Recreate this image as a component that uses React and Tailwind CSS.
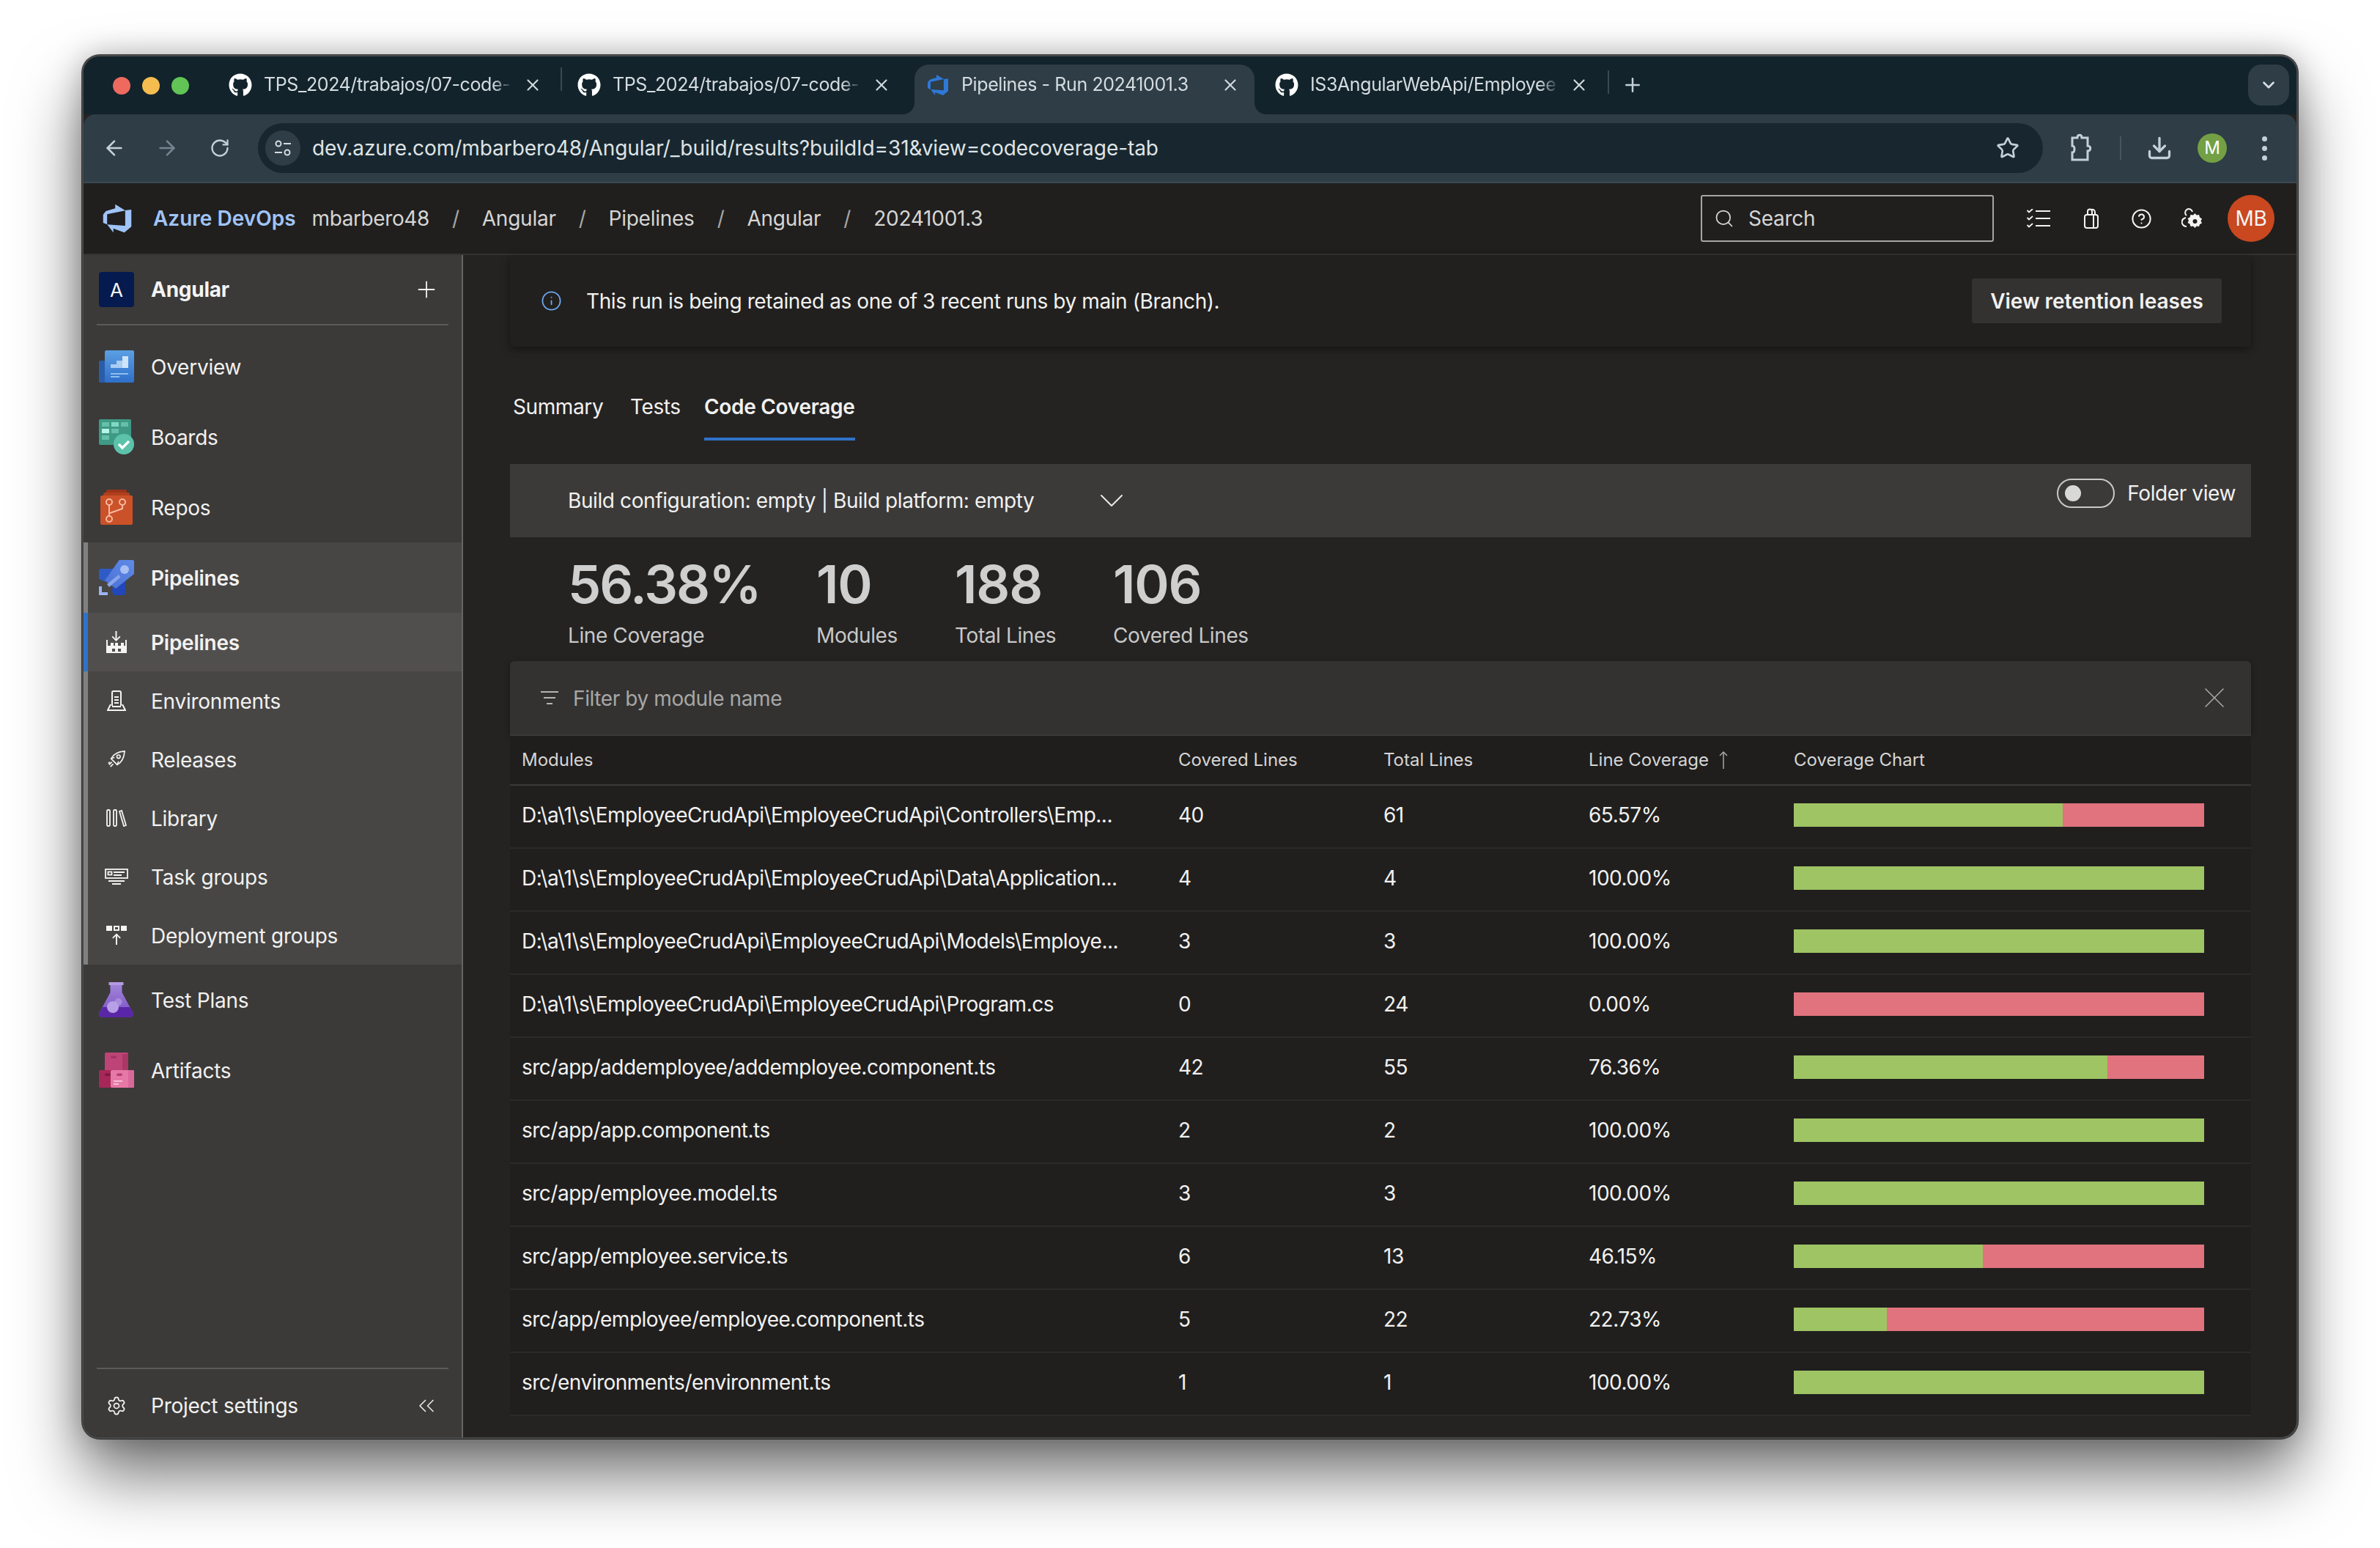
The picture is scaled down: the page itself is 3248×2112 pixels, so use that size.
import { FaGithub } from 'react-icons/fa'
import { VscAzureDevops } from 'react-icons/vsc'
import { ArrowLeft, ArrowRight, RotateCw, Star, Download, Plus, X, ChevronDown, Search, ChevronsLeft, Settings, Info, CircleHelp } from 'lucide-react'

const rows = [
  ['D:\\a\\1\\s\\EmployeeCrudApi\\EmployeeCrudApi\\Controllers\\Emp...', '40', '61', '65.57%', 65.57],
  ['D:\\a\\1\\s\\EmployeeCrudApi\\EmployeeCrudApi\\Data\\Application...', '4', '4', '100.00%', 100],
  ['D:\\a\\1\\s\\EmployeeCrudApi\\EmployeeCrudApi\\Models\\Employe...', '3', '3', '100.00%', 100],
  ['D:\\a\\1\\s\\EmployeeCrudApi\\EmployeeCrudApi\\Program.cs', '0', '24', '0.00%', 0],
  ['src/app/addemployee/addemployee.component.ts', '42', '55', '76.36%', 76.36],
  ['src/app/app.component.ts', '2', '2', '100.00%', 100],
  ['src/app/employee.model.ts', '3', '3', '100.00%', 100],
  ['src/app/employee.service.ts', '6', '13', '46.15%', 46.15],
  ['src/app/employee/employee.component.ts', '5', '22', '22.73%', 22.73],
  ['src/environments/environment.ts', '1', '1', '100.00%', 100],
]

function OverviewIcon() {
  return (
    <svg width="48" height="44" viewBox="0 0 48 44">
      <defs>
        <linearGradient id="ov" x1="0" y1="0" x2="0" y2="1">
          <stop offset="0" stopColor="#5b9fe3" />
          <stop offset="1" stopColor="#2f6fc9" />
        </linearGradient>
      </defs>
      <rect x="0" y="14" width="10" height="30" rx="2" fill="#2a5da8" />
      <rect x="8" y="0" width="40" height="44" rx="2" fill="url(#ov)" />
      <rect x="16" y="19" width="8" height="5" fill="#a9cdf3" />
      <rect x="24" y="14" width="8" height="10" fill="#a9cdf3" />
      <rect x="32" y="8" width="8" height="16" fill="#cfe4fa" />
      <rect x="16" y="31" width="24" height="2" fill="#8fbdee" />
      <rect x="16" y="35" width="12" height="2" fill="#8fbdee" />
    </svg>
  )
}

function BoardsIcon() {
  return (
    <svg width="48" height="48" viewBox="0 0 48 48">
      <rect x="0" y="0" width="44" height="35" rx="2" fill="#3f9a85" />
      <rect x="4" y="4" width="10" height="6" fill="#66bfa9" />
      <rect x="17" y="4" width="10" height="6" fill="#7fd8c4" />
      <rect x="30" y="4" width="10" height="6" fill="#66bfa9" />
      <rect x="4" y="13" width="10" height="6" fill="#b5f5e6" />
      <rect x="17" y="13" width="10" height="6" fill="#66bfa9" />
      <rect x="4" y="22" width="10" height="6" fill="#66bfa9" />
      <circle cx="34" cy="34" r="14" fill="#5cc2aa" />
      <path d="M27 34l5 5 9-9" fill="none" stroke="#fff" strokeWidth="3.5" />
    </svg>
  )
}

function ReposIcon() {
  return (
    <svg width="48" height="48" viewBox="0 0 48 48">
      <rect x="10" y="0" width="28" height="8" rx="2" fill="#9c3418" />
      <rect x="6" y="4" width="36" height="10" rx="2" fill="#b03f1e" />
      <rect x="2" y="8" width="44" height="40" rx="2" fill="#cb5228" />
      <g fill="none" stroke="#f6b9a2" strokeWidth="2">
        <circle cx="14" cy="17" r="4" />
        <circle cx="32" cy="17" r="4" />
        <circle cx="14" cy="40" r="4" />
        <path d="M14 21v15M32 21v5L15 32" />
      </g>
    </svg>
  )
}

function RocketIcon() {
  return (
    <svg width="48" height="48" viewBox="0 0 48 48">
      <defs>
        <linearGradient id="rk" x1="1" y1="0" x2="0" y2="1">
          <stop offset="0" stopColor="#5f8ae6" />
          <stop offset="1" stopColor="#4a72d6" />
        </linearGradient>
      </defs>
      <path d="M2 12h20L10 30 0 26V14z" fill="#2f5bc6" />
      <path d="M36 26v20c0 1-1 2-2 2H20l-3-8z" fill="#2247b8" />
      <path d="M27 1c0-1 1-1 2-1h17c1 0 2 1 2 2v17L23 39 8 28z" fill="url(#rk)" />
      <circle cx="35" cy="13" r="6" fill="#a8bff4" />
      <path d="M11 33l16-13 2.500 3.500L14 37z" fill="#8aa6ea" />
      <path d="M0 36h4v8h8v4H0z" fill="#9db4f0" />
    </svg>
  )
}

function FlaskIcon() {
  return (
    <svg width="48" height="48" viewBox="0 0 48 48">
      <defs>
        <linearGradient id="fl" x1="0" y1="0" x2="0" y2="1">
          <stop offset="0" stopColor="#a083d8" />
          <stop offset="1" stopColor="#7a4fc4" />
        </linearGradient>
      </defs>
      <rect x="13.500" y="0" width="20" height="4" fill="#b49ae2" />
      <path d="M15.500 4h16v10l15 28c1 3-1 6-4 6H4.500c-3 0-5-3-4-6l15-28z" fill="url(#fl)" />
      <path d="M5 34h37l4.500 8c1 3-1 6-4 6H4.500c-3 0-5-3-4-6z" fill="#5a26a8" />
      <circle cx="26.500" cy="27" r="5" fill="#a88ddc" />
      <circle cx="19" cy="34" r="8" fill="#b8a0e6" />
    </svg>
  )
}

function ArtifactsIcon() {
  return (
    <svg width="48" height="48" viewBox="0 0 48 48">
      <rect x="8" y="0" width="32" height="26" rx="2" fill="#be4478" />
      <rect x="32" y="2" width="8" height="24" fill="#ab3765" />
      <rect x="16" y="4.500" width="8" height="3.500" rx="1.750" fill="#a33462" />
      <rect x="0" y="24" width="24" height="24" rx="2" fill="#a62858" />
      <rect x="8" y="28.500" width="8" height="3.500" rx="1.750" fill="#7f1a42" />
      <rect x="16" y="24" width="32" height="24" rx="2" fill="#e678a6" />
      <rect x="40" y="24" width="8" height="24" rx="1" fill="#d8689a" />
      <rect x="24" y="28.500" width="8" height="3.500" rx="1.750" fill="#b83d72" />
      <rect x="20" y="38" width="12" height="2" fill="#f6bdd6" />
      <rect x="20" y="42" width="7" height="2" fill="#f6bdd6" />
    </svg>
  )
}

function PipeSubIcon() {
  return (
    <svg width="28" height="30" viewBox="0 0 28 30" fill="#f4f4f4">
      <rect x="12.500" y="0" width="2" height="13" />
      <path d="M7.500 8l1.300-1.300 4.700 4.700 4.700-4.700L19.500 8l-6 6z" />
      <rect x="0" y="12" width="2" height="8" />
      <rect x="26" y="12" width="2" height="8" />
      <rect x="6" y="16" width="4" height="4" />
      <rect x="12" y="16" width="4" height="4" />
      <rect x="20" y="16" width="4" height="4" />
      <path d="M0 20h28v10H0zM8 24v4h4v-4zM16 24v4h4v-4z" fillRule="evenodd" />
    </svg>
  )
}

function EnvIcon() {
  return (
    <svg width="26" height="28" viewBox="0 0 26 28" fill="none" stroke="#f4f4f4" strokeWidth="2">
      <path d="M7 21V3a2 2 0 0 1 2-2h8a2 2 0 0 1 2 2v18" />
      <path d="M5 19L1 27h24l-4-8" />
      <path d="M7 22h12M10 9h6M10 13h6M10 17h6" />
    </svg>
  )
}

function ReleaseIcon() {
  return (
    <svg width="24" height="24" viewBox="0 0 26 26" fill="none" stroke="#f4f4f4" strokeWidth="1.800">
      <path d="M8 15l-3-3c3-6 8-10 20-11-1 12-5 17-11 20l-3-3z" />
      <circle cx="16" cy="9" r="2.500" />
      <path d="M5 12l5-2M14 21l2-5M6 17l-4 4M8 20l-4 4M3 17l-2 2" />
    </svg>
  )
}

function LibraryIcon() {
  return (
    <svg width="28" height="24" viewBox="0 0 28 24" fill="none" stroke="#f4f4f4" strokeWidth="1.800">
      <rect x="1" y="1" width="4" height="22" rx="1.500" />
      <rect x="10" y="1" width="4" height="22" rx="1.500" />
      <path d="M18 3l3-1 6 20-3 1z" />
    </svg>
  )
}

function TaskIcon() {
  return (
    <svg width="32" height="22" viewBox="0 0 32 22" fill="none" stroke="#f4f4f4" strokeWidth="1.800">
      <rect x="1" y="1" width="30" height="12" />
      <rect x="4.500" y="4.500" width="5" height="4" />
      <path d="M12 5h15M12 9h11M5 17h22M10 21h12" />
    </svg>
  )
}

function DeployIcon() {
  return (
    <svg width="28" height="26" viewBox="0 0 28 26" fill="#f4f4f4">
      <rect x="0" y="0" width="8" height="7" />
      <path d="M10 0h8v7h-8zM12 2v3h4V2z" fillRule="evenodd" />
      <rect x="20" y="0" width="8" height="7" />
      <path d="M13 26V14l-3.500 3.500-1.300-1.300L14 10.500l5.800 5.700-1.300 1.300L15 14v12z" />
    </svg>
  )
}

function ChecklistIcon() {
  return (
    <svg width="32" height="26" viewBox="0 0 32 26" fill="none" stroke="#f4f4f4" strokeWidth="2">
      <path d="M12 3h20M12 13h20M12 23h20" />
      <path d="M0.500 2l2.500 2.500L8 0M0.500 12l2.500 2.500L8 10M0.500 22l2.500 2.500L8 20" strokeWidth="1.800" />
    </svg>
  )
}

function BagIcon() {
  return (
    <svg width="20" height="28" viewBox="0 0 20 28" fill="none" stroke="#f4f4f4" strokeWidth="2">
      <rect x="1" y="9" width="18" height="18" rx="3" />
      <path d="M5 9V4.500a3 3 0 0 1 6 0V9M9 2.500c3-2 6 0 6 3V9M13 9v18" />
    </svg>
  )
}

function PersonGearIcon() {
  return (
    <svg width="28" height="28" viewBox="0 0 28 28" fill="none" stroke="#f4f4f4" strokeWidth="2">
      <path d="M7 10a5 5 0 1 1 8-5" />
      <path d="M6 13c-4 1-6 4-5 8 1 2 3 4 6 4" />
      <path d="M18.500 9l2 2.500 3.500-.5 1 3.500 3 2-1.500 3 1.500 3-3 1.500-1 3-3.500-.5-2 2.500-2.500-2.500-3.500.5-1-3.500-3-1.500 1.500-3-1.500-3 3-1.500 1-3.500 3.500.5z" fill="#f4f4f4" stroke="none" transform="translate(0 -2)" />
      <circle cx="18.500" cy="18" r="3" fill="#201f1e" stroke="none" />
    </svg>
  )
}

function PuzzleIcon() {
  return (
    <svg width="32" height="40" viewBox="0 0 32 40" fill="none" stroke="#c3d0d8" strokeWidth="3">
      <path d="M4 6h7c0-5 6-5 6 0h8v11c5 0 5 7 0 7v12H4V26c4 0 4-9 0-9z" />
    </svg>
  )
}

function Tab({ title, active, icon, divider }) {
  return (
    <div className="relative flex h-[68px] w-[476px] shrink-0 items-start pt-[11px]">
      {active && <span className="absolute inset-x-[6px] inset-y-0 rounded-t-[20px] bg-[#2e3d46]" />}
      {active && <span className="absolute -left-[10px] bottom-0 h-[16px] w-[16px] bg-[radial-gradient(circle_at_0_0,transparent_15.5px,#2e3d46_16.5px)]" />}
      {active && <span className="absolute -right-[10px] bottom-0 h-[16px] w-[16px] bg-[radial-gradient(circle_at_100%_0,transparent_15.5px,#2e3d46_16.5px)]" />}
      <div className="relative flex h-[34px] w-full items-center pl-[22px]">
        {icon}
        <span className="ml-[16px] w-[340px] shrink-0 whitespace-nowrap text-[25px] tracking-[-0.4px] text-[#d5dce0] [mask-image:linear-gradient(90deg,#000_92%,transparent)]">{title}</span>
        <X size={26} strokeWidth={2} className="ml-[14px] shrink-0 text-[#cfd8dd]" />
      </div>
      {divider && <span className="absolute -right-[1px] top-[4px] h-[32px] w-[2px] bg-[#3a4a53]" />}
    </div>
  )
}

function NavRow({ icon, label, sub, bold, selected, group }) {
  return (
    <div className={`flex shrink-0 items-center ${sub ? 'h-[80px]' : 'h-[96px]'} ${group ? 'border-l-[6px] pl-[15px]' : 'pl-[21px]'} ${selected ? 'border-[#2f72c9] bg-[#514f4e]' : ''} ${group && !selected ? 'border-[#808080] bg-[#474645]' : ''}`}>
      <div className="flex w-[48px] shrink-0 justify-center">{icon}</div>
      <span className={`ml-[23px] pt-[2px] text-[28px] tracking-[-0.25px] text-[#f2f1f0] ${bold ? 'font-semibold' : ''}`}>{label}</span>
    </div>
  )
}

function Stat({ value, label, width, tight }) {
  return (
    <div className={width}>
      <div className={`text-[72px] font-semibold leading-[72px] text-[#cfcfcf] ${tight ? 'tracking-[-2px]' : 'tracking-[-1.2px]'}`}>{value}</div>
      <div className="mt-[16px] text-[28px] leading-[36px] tracking-[-0.4px] text-[#c8c8c8]">{label}</div>
    </div>
  )
}

export default function App() {
  return (
    <div className="h-[2112px] w-[3248px] overflow-hidden bg-white pl-[112px] pt-[75px] font-['Inter',sans-serif]">
      <div className="flex h-[1888px] w-[3024px] flex-col overflow-hidden rounded-[24px] border-[2px] border-[#4a4a4a] bg-[#242322] shadow-[0_0_0_1px_rgba(0,0,0,0.7),0_50px_90px_rgba(0,0,0,0.55),0_0_40px_rgba(0,0,0,0.25)]">

        {/* Tab strip */}
        <div className="flex h-[79px] shrink-0 items-end bg-[#12232b] pl-[40px]">
          <div className="mb-[27px] flex w-[136px] shrink-0 gap-[16px]">
            <span className="h-[24px] w-[24px] rounded-full bg-[#ee6a5f]" />
            <span className="h-[24px] w-[24px] rounded-full bg-[#f5bd4f]" />
            <span className="h-[24px] w-[24px] rounded-full bg-[#61c454]" />
          </div>
          <Tab title="TPS_2024/trabajos/07-code-" divider icon={<FaGithub size={32} className="shrink-0 text-white" />} />
          <Tab title="TPS_2024/trabajos/07-code-" icon={<FaGithub size={32} className="shrink-0 text-white" />} />
          <Tab title="Pipelines - Run 20241001.3" active icon={<VscAzureDevops size={32} className="shrink-0 text-[#2f78d8]" />} />
          <Tab title="IS3AngularWebApi/Employee" icon={<FaGithub size={32} className="shrink-0 text-white" />} />
          <span className="mb-[28px] h-[32px] w-[2px] bg-[#3a4a53]" />
          <Plus size={30} strokeWidth={2} className="mb-[25px] ml-[17px] text-[#c3d0d8]" />
          <div className="mb-[12px] ml-auto mr-[10px] flex h-[56px] w-[56px] items-center justify-center rounded-[18px] bg-[#2e3d46]">
            <ChevronDown size={26} strokeWidth={2.5} className="text-[#d5dce0]" />
          </div>
        </div>

        {/* Address bar */}
        <div className="flex h-[94px] shrink-0 items-center rounded-t-[16px] border-b-[2px] border-[#3b4952] bg-[#2e3d46] pl-[26px]">
          <ArrowLeft size={32} strokeWidth={2} className="text-[#c3d0d8]" />
          <ArrowRight size={32} strokeWidth={2} className="ml-[40px] text-[#75858f]" />
          <RotateCw size={28} strokeWidth={2} className="ml-[42px] text-[#c3d0d8]" />
          <div className="ml-[38px] flex h-[68px] w-[2436px] shrink-0 items-center rounded-full bg-[#18272f] pl-[10px]">
            <div className="flex h-[48px] w-[48px] items-center justify-center rounded-full bg-[#2e3d46]">
              <svg width="26" height="26" viewBox="0 0 26 26" fill="none" stroke="#d5dce0" strokeWidth="2">
                <circle cx="7" cy="7" r="3.500" />
                <circle cx="19" cy="19" r="3.500" />
                <path d="M14 7h10M2 19h10" />
              </svg>
            </div>
            <span className="ml-[16px] text-[28px] tracking-[-0.06px] text-[#dfe3e6]">dev.azure.com/mbarbero48/Angular/_build/results?buildId=31&amp;view=codecoverage-tab</span>
            <Star size={32} strokeWidth={2} className="ml-auto mr-[32px] text-[#c3d0d8]" />
          </div>
          <div className="ml-[36px]"><PuzzleIcon /></div>
          <span className="ml-[37px] h-[32px] w-[2px] bg-[#46555e]" />
          <Download size={36} strokeWidth={2.2} className="ml-[34px] text-[#c3d0d8]" />
          <div className="ml-[34px] flex h-[40px] w-[40px] items-center justify-center rounded-full bg-[#74a045] text-[24px] text-white">M</div>
          <div className="ml-[48px] flex flex-col gap-[6px]">
            <span className="h-[7px] w-[7px] rounded-full bg-[#c3d0d8]" />
            <span className="h-[7px] w-[7px] rounded-full bg-[#c3d0d8]" />
            <span className="h-[7px] w-[7px] rounded-full bg-[#c3d0d8]" />
          </div>
        </div>

        {/* Azure DevOps header */}
        <div className="flex h-[98px] shrink-0 items-center border-b-[2px] border-[#343332] bg-[#201f1e] pl-[24px] pr-[30px] text-[28px] tracking-[-0.25px] text-[#d6d5d4]">
          <VscAzureDevops size={44} className="text-[#a0c4f8]" />
          <span className="ml-[27px] font-semibold tracking-normal text-[#a0c4f8]">Azure DevOps</span>
          <span className="ml-[22px] tracking-[-0.4px]">mbarbero48</span>
          <span className="ml-[31px] text-[#a8a7a6]">/</span>
          <span className="ml-[31px]">Angular</span>
          <span className="ml-[31px] text-[#a8a7a6]">/</span>
          <span className="ml-[31px]">Pipelines</span>
          <span className="ml-[31px] text-[#a8a7a6]">/</span>
          <span className="ml-[31px]">Angular</span>
          <span className="ml-[31px] text-[#a8a7a6]">/</span>
          <span className="ml-[31px]">20241001.3</span>
          <div className="ml-auto flex h-[64px] w-[400px] items-center rounded-[3px] border-[2px] border-[#a6a5a4] pl-[16px]">
            <Search size={28} strokeWidth={1.5} className="text-[#d6d5d4]" />
            <span className="ml-[19px] text-[#d6d5d4]">Search</span>
          </div>
          <div className="ml-[45px]"><ChecklistIcon /></div>
          <div className="ml-[46px]"><BagIcon /></div>
          <CircleHelp size={29} strokeWidth={1.7} className="ml-[44px] text-[#f4f4f4]" />
          <div className="ml-[40px]"><PersonGearIcon /></div>
          <div className="ml-[35px] flex h-[64px] w-[64px] items-center justify-center rounded-full bg-[#c9481f] text-[#f4f4f4]">MB</div>
        </div>

        <div className="flex min-h-0 flex-1">
          {/* Sidebar */}
          <aside className="flex w-[518px] shrink-0 flex-col border-r-[2px] border-[#666564] bg-[#3b3a39]">
            <div className="flex h-[94px] shrink-0 items-center pl-[21px]">
              <div className="flex h-[48px] w-[48px] items-center justify-center rounded-[4px] bg-[#051a4f] text-[26px] text-[#f4f4f4]">A</div>
              <span className="ml-[23px] text-[28px] font-bold tracking-[-0.25px] text-[#f4f4f4]">Angular</span>
              <Plus size={36} strokeWidth={1.2} className="ml-auto mr-[30px] text-[#f4f4f4]" />
            </div>
            <div className="mx-[18px] h-[2px] shrink-0 bg-[#5c5b5a]" />
            <div className="h-[8px] shrink-0" />
            <NavRow icon={<OverviewIcon />} label="Overview" />
            <NavRow icon={<BoardsIcon />} label="Boards" />
            <NavRow icon={<ReposIcon />} label="Repos" />
            <NavRow icon={<RocketIcon />} label="Pipelines" bold group />
            <NavRow icon={<PipeSubIcon />} label="Pipelines" bold group selected sub />
            <NavRow icon={<EnvIcon />} label="Environments" group sub />
            <NavRow icon={<ReleaseIcon />} label="Releases" group sub />
            <NavRow icon={<LibraryIcon />} label="Library" group sub />
            <NavRow icon={<TaskIcon />} label="Task groups" group sub />
            <NavRow icon={<DeployIcon />} label="Deployment groups" group sub />
            <NavRow icon={<FlaskIcon />} label="Test Plans" />
            <NavRow icon={<ArtifactsIcon />} label="Artifacts" />
            <div className="mx-[18px] mt-auto h-[2px] shrink-0 bg-[#5c5b5a]" />
            <div className="flex h-[93px] shrink-0 items-center pl-[31px] pt-[6px]">
              <Settings size={28} strokeWidth={1.5} className="text-[#f4f4f4]" />
              <span className="ml-[33px] text-[28px] tracking-[-0.25px] text-[#f2f1f0]">Project settings</span>
              <ChevronsLeft size={36} strokeWidth={1.1} className="ml-auto mr-[30px] text-[#e8e8e8]" />
            </div>
          </aside>

          {/* Main content */}
          <main className="min-w-0 flex-1 pl-[64px] pr-[62px] text-[28px] tracking-[-0.4px] text-[#f2f1f0]">
            <div className="flex h-[125px] items-center rounded-b-[6px] bg-[#21201f] pl-[42px] pr-[40px] shadow-[0_4px_12px_rgba(0,0,0,0.4)]">
              <Info size={29} strokeWidth={1.5} className="text-[#6fa8ee]" />
              <span className="ml-[33px]">This run is being retained as one of 3 recent runs by main (Branch).</span>
              <div className="ml-auto flex h-[61px] w-[341px] items-center justify-center rounded-[3px] bg-[#333231] font-semibold tracking-normal">View retention leases</div>
            </div>

            <div className="mt-[35px] flex h-[93px] pl-[4px]">
              <div className="w-[160px] pt-[26px]">Summary</div>
              <div className="w-[101px] pt-[26px]">Tests</div>
              <div className="h-full border-b-[4px] border-[#2f72c9] pt-[26px] font-semibold tracking-[-0.3px]">Code Coverage</div>
            </div>

            <div className="mt-[32px] flex h-[100px] items-start justify-between bg-[#3b3a39] pl-[79px] pr-[21px]">
              <div className="flex h-full items-center">
                <span>Build configuration: empty | Build platform: empty</span>
                <ChevronDown size={56} strokeWidth={0.85} className="ml-[78px] text-[#e8e8e8]" />
              </div>
              <div className="mt-[20px] flex h-[40px] items-center">
                <div className="flex h-[40px] w-[79px] items-center rounded-full border-[2px] border-[#c8c8c8] pl-[9px]">
                  <span className="h-[22px] w-[22px] rounded-full bg-[#d8d8d6]" />
                </div>
                <span className="ml-[17px]">Folder view</span>
              </div>
            </div>

            <div className="flex pl-[79px] pt-[28px]">
              <Stat value="56.38%" label="Line Coverage" width="w-[339px]" tight />
              <Stat value="10" label="Modules" width="w-[189px]" />
              <Stat value="188" label="Total Lines" width="w-[216px]" />
              <Stat value="106" label="Covered Lines" width="w-[300px]" />
            </div>

            <div className="mt-[17px] flex h-[100px] items-center rounded-t-[6px] bg-[#333231] pl-[42px] pr-[26px] shadow-[0_2px_8px_rgba(0,0,0,0.3)]">
              <svg width="24" height="18" viewBox="0 0 24 18" fill="#b5b4b3">
                <rect x="0" y="0" width="24" height="2" />
                <rect x="4" y="8" width="16" height="2" />
                <rect x="8" y="16" width="8" height="2" />
              </svg>
              <span className="ml-[20px] pt-[2px] text-[#a8a7a6]">Filter by module name</span>
              <X size={48} strokeWidth={0.8} className="ml-auto text-[#a8a7a6]" />
            </div>

            <div className="grid h-[70px] grid-cols-[896px_280px_280px_280px_1fr] items-center border-y-[2px] border-[#3a3938] bg-[#1f1e1d] pl-[16px] text-[24px] tracking-normal text-[#d6d5d4]">
              <span>Modules</span>
              <span>Covered Lines</span>
              <span>Total Lines</span>
              <span className="flex items-center gap-[14px]">
                Line Coverage
                <svg width="12" height="24" viewBox="0 0 12 24" fill="none" stroke="#a8a7a6" strokeWidth="1.500">
                  <path d="M6 24V1M1 6l5-5 5 5" />
                </svg>
              </span>
              <span>Coverage Chart</span>
            </div>

            {rows.map(([name, covered, total, pct, value]) => (
              <div key={name} className="grid h-[86px] grid-cols-[896px_280px_280px_280px_1fr] items-center border-b-[2px] border-[#2b2a29] bg-[#201f1e] pb-[4px] pl-[16px] tracking-[-0.5px]">
                <span className="whitespace-nowrap">{name}</span>
                <span>{covered}</span>
                <span>{total}</span>
                <span>{pct}</span>
                <div className="flex h-[32px] w-[560px] bg-[#e0737e]">
                  <div className="h-full bg-[#9fc463]" style={{ width: `${value}%` }} />
                </div>
              </div>
            ))}
          </main>
        </div>
      </div>
    </div>
  )
}
